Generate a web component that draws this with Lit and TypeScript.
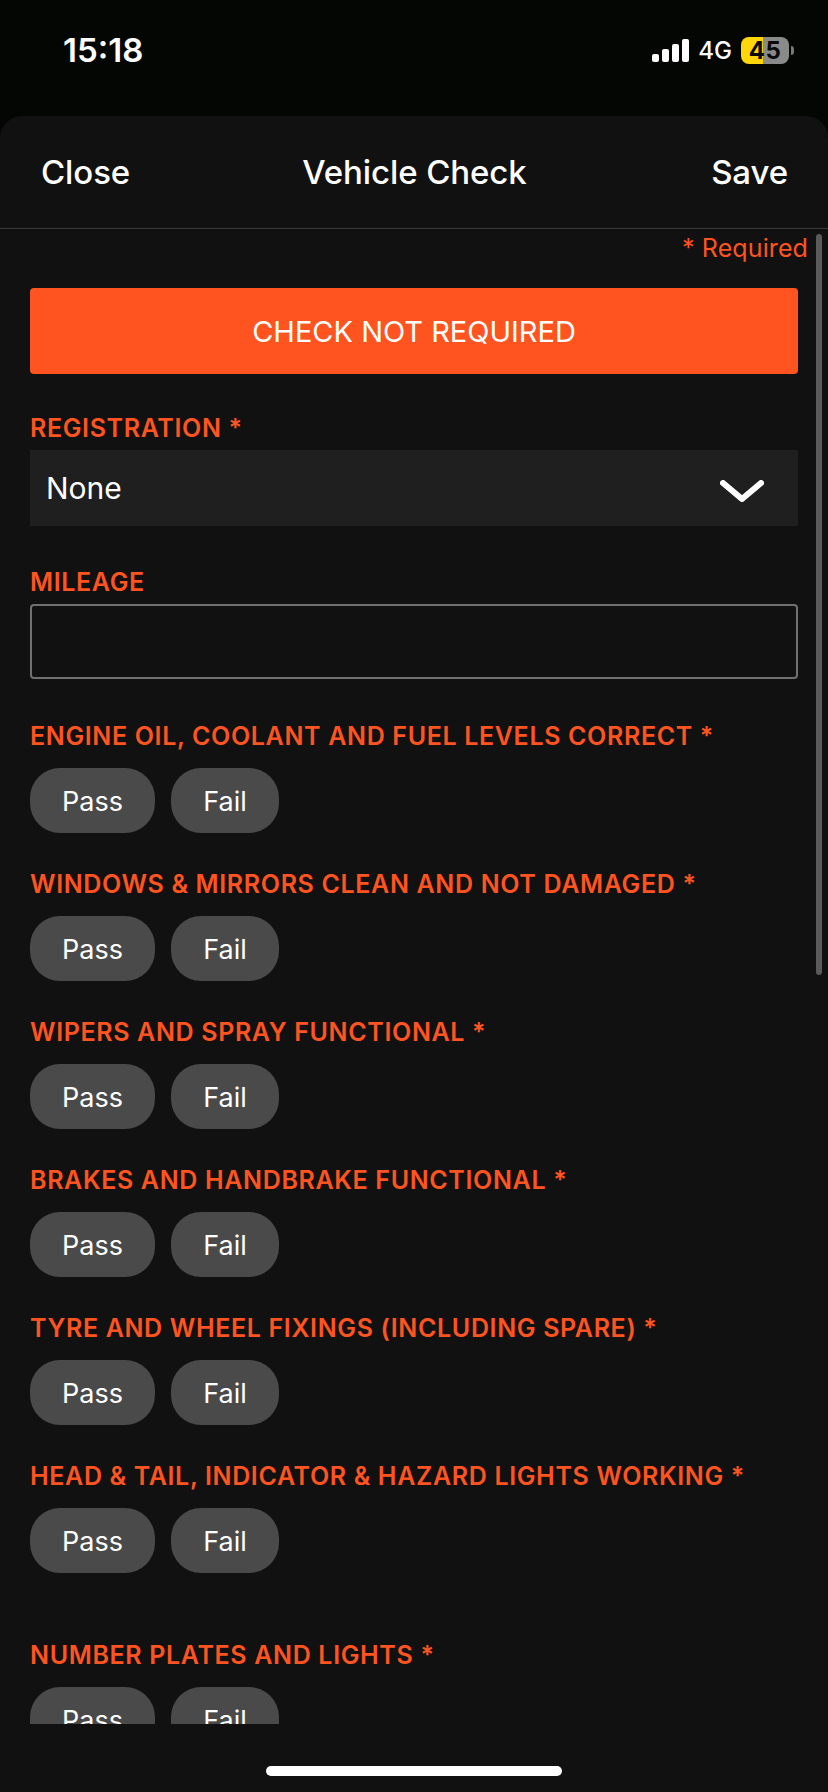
import { LitElement, html, css, svg } from "lit";
import { customElement } from "lit/decorators.js";

const CHECKS: { label: string; spaced?: boolean }[] = [
  { label: "ENGINE OIL, COOLANT AND FUEL LEVELS CORRECT *" },
  { label: "WINDOWS & MIRRORS CLEAN AND NOT DAMAGED *" },
  { label: "WIPERS AND SPRAY FUNCTIONAL *" },
  { label: "BRAKES AND HANDBRAKE FUNCTIONAL *" },
  { label: "TYRE AND WHEEL FIXINGS (INCLUDING SPARE) *" },
  { label: "HEAD & TAIL, INDICATOR & HAZARD LIGHTS WORKING *" },
  { label: "NUMBER PLATES AND LIGHTS *", spaced: true },
];

@customElement("app-root")
export class AppRoot extends LitElement {
  static styles = css`
    :host {
      display: flex;
      flex-direction: column;
      width: 828px;
      height: 1792px;
      overflow: hidden;
      background: #040604;
      font-family: Inter, "Liberation Sans", sans-serif;
      color: #fff;
    }
    .status {
      height: 116px;
      flex: none;
      display: flex;
      justify-content: space-between;
      align-items: flex-start;
      box-sizing: border-box;
      padding: 36px 34px 0 63px;
    }
    .time {
      font-size: 33px;
      font-weight: 600;
      line-height: 28px;
    }
    .indicators {
      display: flex;
      align-items: center;
      height: 28px;
    }
    .net {
      font-size: 24px;
      font-weight: 500;
      margin: 0 9px 0 9px;
    }
    .battery {
      position: relative;
      width: 48px;
      height: 27px;
      border-radius: 8px;
      overflow: hidden;
      background: linear-gradient(90deg, #ffd60a 0 22px, #8a8a8a 22px);
      color: #0a0a0a;
      font-size: 24px;
      font-weight: 700;
      line-height: 27px;
      text-align: center;
      letter-spacing: 0.5px;
    }
    .nub {
      width: 3px;
      height: 9px;
      margin-left: 2px;
      border-radius: 0 3px 3px 0;
      background: #777;
    }
    .sheet {
      flex: 1;
      min-height: 0;
      display: flex;
      flex-direction: column;
      position: relative;
      background: #111111;
      border-radius: 22px 22px 0 0;
    }
    .nav {
      flex: none;
      height: 113px;
      box-sizing: border-box;
      padding: 0 40px 1px 41px;
      display: grid;
      grid-template-columns: 1fr auto 1fr;
      align-items: center;
      border-bottom: 1px solid #3a3a3a;
      font-size: 33px;
      font-weight: 500;
      letter-spacing: -0.1px;
    }
    .nav .save {
      text-align: right;
    }
    .scroll {
      flex: 1;
      min-height: 0;
      overflow: hidden;
      padding: 3px 30px 0 30px;
    }
    .required {
      text-align: right;
      font-size: 25px;
      height: 32px;
      line-height: 33px;
      letter-spacing: 0.1px;
      color: #ff5420;
      margin: 0 -10px 24px 0;
    }
    .cta {
      height: 86px;
      box-sizing: border-box;
      padding-top: 1px;
      display: flex;
      align-items: center;
      justify-content: center;
      background: #ff5420;
      border-radius: 4px;
      font-size: 29px;
      color: #fff;
      margin-bottom: 38px;
    }
    .label {
      font-size: 25px;
      font-weight: 600;
      height: 32px;
      line-height: 33px;
      color: #ff5420;
      letter-spacing: 0.65px;
    }
    .select {
      margin-top: 6px;
      height: 76px;
      box-sizing: border-box;
      padding: 0 34px 0 16px;
      display: flex;
      align-items: center;
      justify-content: space-between;
      background: #1f1f1f;
      font-size: 30px;
    }
    .select svg {
      margin-top: 5px;
    }
    .mileage-label {
      margin-top: 40px;
    }
    .input {
      margin-top: 6px;
      height: 75px;
      box-sizing: border-box;
      border: 2px solid #707070;
      border-radius: 4px;
    }
    .check {
      margin-top: 41px;
    }
    .check + .check {
      margin-top: 35px;
    }
    .check.spaced {
      margin-top: 66px;
    }
    .pills {
      margin-top: 16px;
      display: flex;
      gap: 16px;
    }
    .pill {
      height: 65px;
      box-sizing: border-box;
      padding-top: 2px;
      display: flex;
      align-items: center;
      justify-content: center;
      background: #4a4a4a;
      border-radius: 30px;
      font-size: 27px;
      color: #fff;
    }
    .pill.pass {
      width: 125px;
    }
    .pill.fail {
      width: 108px;
    }
    .foot {
      flex: none;
      height: 68px;
      display: flex;
      justify-content: center;
      padding-top: 42px;
      box-sizing: border-box;
    }
    .home {
      width: 296px;
      height: 10px;
      border-radius: 5px;
      background: #fff;
    }
    .scrollbar {
      position: absolute;
      top: 118px;
      left: 816px;
      width: 6px;
      height: 741px;
      border-radius: 3px;
      background: #5a5a5a;
    }
  `;

  private signal() {
    return svg`<svg width="37" height="23" viewBox="0 0 37 23" fill="#fff">
      <rect x="0" y="15" width="7" height="8" rx="2"/>
      <rect x="10" y="10" width="7" height="13" rx="2"/>
      <rect x="20" y="5" width="7" height="18" rx="2"/>
      <rect x="30" y="0" width="7" height="23" rx="2"/>
    </svg>`;
  }

  render() {
    return html`
      <div class="status">
        <div class="time">15:18</div>
        <div class="indicators">
          ${this.signal()}
          <span class="net">4G</span>
          <div class="battery">45</div>
          <div class="nub"></div>
        </div>
      </div>
      <div class="sheet">
        <div class="nav">
          <span>Close</span>
          <span>Vehicle Check</span>
          <span class="save">Save</span>
        </div>
        <div class="scroll">
          <div class="required">* Required</div>
          <div class="cta">CHECK NOT REQUIRED</div>
          <div class="label">REGISTRATION *</div>
          <div class="select">
            <span>None</span>
            <svg width="44" height="22" viewBox="0 0 44 22" fill="none" stroke="#fff" stroke-width="6" stroke-linecap="round" stroke-linejoin="round">
              <path d="M3 3 L22 19 L41 3" />
            </svg>
          </div>
          <div class="label mileage-label">MILEAGE</div>
          <div class="input"></div>
          ${CHECKS.map(
            (c) => html`
              <div class="check ${c.spaced ? "spaced" : ""}">
                <div class="label">${c.label}</div>
                <div class="pills">
                  <div class="pill pass">Pass</div>
                  <div class="pill fail">Fail</div>
                </div>
              </div>
            `
          )}
        </div>
        <div class="foot"><div class="home"></div></div>
        <div class="scrollbar"></div>
      </div>
    `;
  }
}
